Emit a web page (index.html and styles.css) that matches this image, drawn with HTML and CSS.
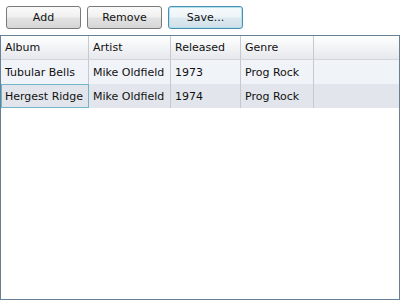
FILE: index.html
```html
<!DOCTYPE html>
<html lang="en">
<head>
    <meta charset="UTF-8">
    <title>Albums</title>
    <link rel="stylesheet" href="styles.css">
</head>
<body>

<div class="toolbar">
    <button class="btn">Add</button>
    <button class="btn">Remove</button>
    <button class="btn btn-focus">Save...</button>
</div>

<div class="grid">
    <div class="row header">
        <div class="cell">Album</div>
        <div class="cell">Artist</div>
        <div class="cell">Released</div>
        <div class="cell">Genre</div>
        <div class="cell filler"></div>
    </div>
    <div class="row odd">
        <div class="cell">Tubular Bells</div>
        <div class="cell">Mike Oldfield</div>
        <div class="cell">1973</div>
        <div class="cell">Prog Rock</div>
        <div class="cell filler"></div>
    </div>
    <div class="row even">
        <div class="cell current">Hergest Ridge</div>
        <div class="cell">Mike Oldfield</div>
        <div class="cell">1974</div>
        <div class="cell">Prog Rock</div>
        <div class="cell filler"></div>
    </div>
</div>

</body>
</html>
```

FILE: styles.css
```css
body {
    margin: 0;
    font-family: "DejaVu Sans", Tahoma, sans-serif;
    font-size: 11px;
    color: #111;
    background-color: #fff;
}

.toolbar {
    display: flex;
    gap: 6px;
    padding: 6px 6px 0;
}

.btn {
    width: 75px;
    height: 23px;
    padding: 0;
    font-family: inherit;
    font-size: 11px;
    color: #111;
    border: 1px solid #7a7a7a;
    border-radius: 3px;
    background: linear-gradient(#fafafa 0%, #f0f0f0 48%, #e2e2e2 52%, #d6d6d6 100%);
}

.btn-focus {
    border-color: #4a8fb0;
    box-shadow: inset 0 0 0 1px #b4e0ec;
    background: linear-gradient(#f6fafc 0%, #edf4f8 48%, #dde9f0 52%, #d0e0e8 100%);
}

.grid {
    margin-top: 6px;
    height: 263px;
    border: 1px solid #688096;
    background-color: #fff;
}

.row {
    display: grid;
    grid-template-columns: 88px 82px 70px 73px 1fr;
    height: 24px;
}

.cell {
    display: flex;
    align-items: center;
    padding-left: 4px;
    border-right: 1px solid #c6c9cd;
    box-sizing: border-box;
    white-space: nowrap;
}

.cell.filler {
    border-right: none;
}

.header {
    background: linear-gradient(#ffffff, #e6e8ec);
    border-bottom: 1px solid #d2d5da;
    box-sizing: border-box;
}

.odd {
    background-color: #f0f3f8;
}

.even {
    background-color: #e2e6ec;
}

.cell.current {
    border: 1px solid #6fb7c8;
    padding-left: 3px;
}
```
